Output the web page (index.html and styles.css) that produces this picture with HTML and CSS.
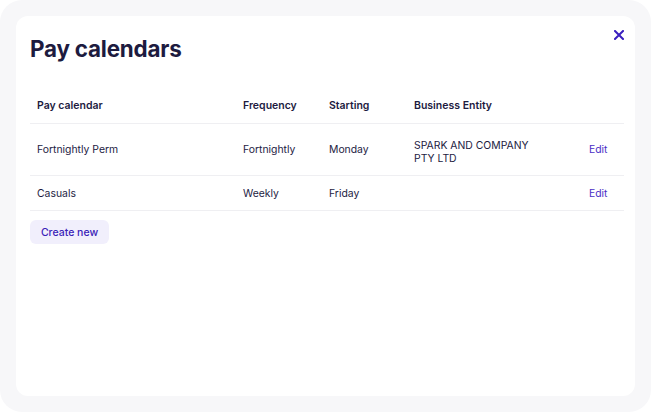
FILE: index.html
```html
<!DOCTYPE html>
<html>
<head>
<meta charset="utf-8">
<link rel="stylesheet" href="styles.css">
</head>
<body>
<div class="frame">
  <div class="card">
    <button class="close" aria-label="Close">
      <svg width="10" height="10" viewBox="0 0 10 10"><path d="M1 1L9 9M9 1L1 9" stroke="#3a1fbf" stroke-width="2" stroke-linecap="square"/></svg>
    </button>
    <h1 class="title">Pay calendars</h1>
    <table class="tbl">
      <colgroup>
        <col class="c1"><col class="c2"><col class="c3"><col class="c4"><col class="c5">
      </colgroup>
      <thead>
        <tr class="head-row">
          <th>Pay calendar</th><th>Frequency</th><th>Starting</th><th>Business Entity</th><th></th>
        </tr>
      </thead>
      <tbody>
        <tr class="row-tall">
          <td>Fortnightly Perm</td><td>Fortnightly</td><td>Monday</td><td><div class="entity">SPARK AND COMPANY PTY LTD</div></td><td><a class="edit" href="#">Edit</a></td>
        </tr>
        <tr class="row">
          <td>Casuals</td><td>Weekly</td><td>Friday</td><td></td><td><a class="edit" href="#">Edit</a></td>
        </tr>
      </tbody>
    </table>
    <button class="create">Create new</button>
  </div>
</div>
</body>
</html>
```

FILE: styles.css
```css
html, body {
  margin: 0;
  padding: 0;
  background: #ffffff;
}
body {
  font-family: Inter, "Noto Sans", sans-serif;
  color: #1d1b3f;
}
.frame {
  width: 651px;
  height: 412px;
  box-sizing: border-box;
  padding: 16px;
  background: #f7f7f9;
  border-radius: 22px;
}
.card {
  position: relative;
  height: 100%;
  background: #ffffff;
  border-radius: 12px;
  padding: 19px 11px 0 14px;
  box-sizing: border-box;
}
.close {
  position: absolute;
  top: 12px;
  right: 9px;
  width: 14px;
  height: 14px;
  padding: 2px;
  border: 0;
  background: transparent;
  display: flex;
  align-items: center;
  justify-content: center;
}
.title {
  margin: 0;
  font-size: 22.4px;
  line-height: 28px;
  font-weight: 700;
  letter-spacing: -0.2px;
  color: #1d1b3f;
}
.tbl {
  margin-top: 25px;
  width: 594px;
  border-collapse: collapse;
  table-layout: fixed;
  font-size: 10.4px;
}
.c1 { width: 206px; }
.c2 { width: 86px; }
.c3 { width: 85px; }
.c4 { width: 175px; }
.c5 { width: 42px; }
.tbl th, .tbl td {
  padding: 0 0 0 7px;
  text-align: left;
  vertical-align: middle;
  border-bottom: 1px solid #efeff2;
}
.tbl th {
  font-weight: 600;
  font-size: 10.5px;
}
.head-row th { height: 35px; }
.row-tall td { height: 51px; }
.row td { height: 34px; }
.entity {
  max-width: 125px;
  line-height: 13px;
  padding-top: 4px;
}
.edit {
  color: #4b2fc6;
  text-decoration: none;
}
.create {
  margin-top: 9px;
  width: 79px;
  height: 24px;
  border: 0;
  border-radius: 6px;
  background: #f1effc;
  color: #3a22b8;
  font-family: Inter, "Noto Sans", sans-serif;
  font-size: 10.5px;
  font-weight: 500;
  padding: 0;
}
```
